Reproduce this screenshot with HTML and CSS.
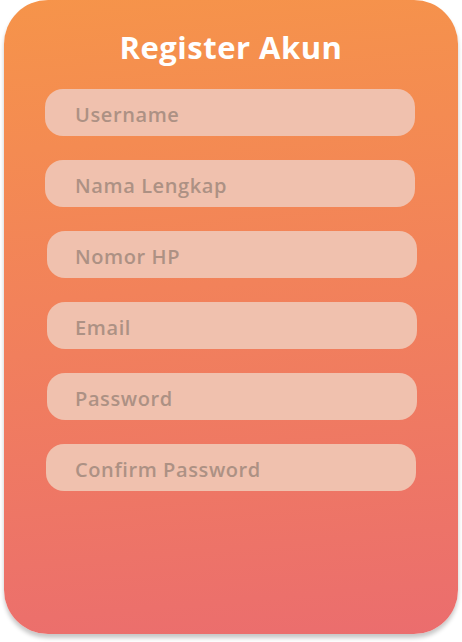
FILE: index.html
```html
<!DOCTYPE html>
<html lang="id">
<head>
<meta charset="utf-8">
<title>Register Akun</title>
<link rel="stylesheet" href="styles.css">
</head>
<body>
<main class="card">
  <h1 class="title">Register Akun</h1>
  <form class="form">
    <input class="field" type="text" placeholder="Username">
    <input class="field" type="text" placeholder="Nama Lengkap">
    <input class="field field--shift" type="tel" placeholder="Nomor HP">
    <input class="field field--shift" type="email" placeholder="Email">
    <input class="field field--shift" type="password" placeholder="Password">
    <input class="field field--half" type="password" placeholder="Confirm Password">
  </form>
</main>
</body>
</html>
```
FILE: styles.css
```css
html, body {
  margin: 0;
  padding: 0;
  background: #ffffff;
}
body {
  width: 462px;
  height: 642px;
  font-family: "Open Sans", "Liberation Sans", sans-serif;
}
.card {
  box-sizing: border-box;
  margin-left: 4px;
  width: 454px;
  height: 634px;
  border-radius: 44px;
  background: linear-gradient(175deg, #f6944a 0%, #f2825a 45%, #eb6d6e 100%);
  box-shadow: 0 4px 4px rgba(0, 0, 0, 0.22);
  padding-top: 28px;
  display: flex;
  flex-direction: column;
  align-items: center;
}
.title {
  margin: 0;
  color: #ffffff;
  font-size: 31px;
  line-height: 38px;
  font-weight: 700;
  letter-spacing: 0.5px;
  text-align: center;
}
.form {
  margin-top: 23px;
  align-self: stretch;
  display: flex;
  flex-direction: column;
  gap: 24px;
  padding-left: 41px;
}
.field {
  box-sizing: border-box;
  width: 370px;
  height: 47px;
  border: none;
  outline: none;
  border-radius: 18px;
  background: #f0c1ae;
  padding: 3px 0 0 30px;
  font-family: "Open Sans", "Liberation Sans", sans-serif;
  font-size: 20px;
  font-weight: 600;
  letter-spacing: 0.6px;
  color: #a68c80;
}
.field--shift {
  margin-left: 2px;
  padding-left: 28px;
}
.field--half {
  margin-left: 1px;
  padding-left: 29px;
}
.field::placeholder {
  color: #ad9184;
  opacity: 1;
}
```
